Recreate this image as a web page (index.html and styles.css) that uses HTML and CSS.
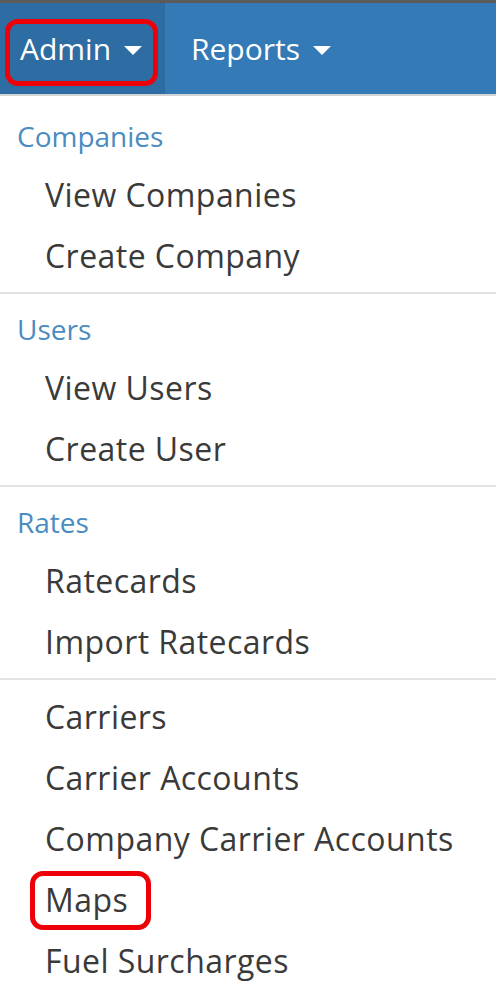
FILE: index.html
```html
<!DOCTYPE html>
<html>
<head>
<meta charset="utf-8">
<link rel="stylesheet" href="styles.css">
</head>
<body>
<div class="topline"></div>
<nav class="navbar">
  <div class="nav-item active"><a class="nav-link marked-nav">Admin <span class="caret"></span></a></div>
  <div class="nav-item"><a class="nav-link">Reports <span class="caret"></span></a></div>
</nav>
<div class="menu">
  <div class="section first">
    <div class="header">Companies</div>
    <div class="item">View Companies</div>
    <div class="item">Create Company</div>
  </div>
  <div class="divider"></div>
  <div class="section">
    <div class="header">Users</div>
    <div class="item">View Users</div>
    <div class="item">Create User</div>
  </div>
  <div class="divider"></div>
  <div class="section">
    <div class="header">Rates</div>
    <div class="item">Ratecards</div>
    <div class="item">Import Ratecards</div>
  </div>
  <div class="divider"></div>
  <div class="section last">
    <div class="item">Carriers</div>
    <div class="item">Carrier Accounts</div>
    <div class="item">Company Carrier Accounts</div>
    <div class="item"><span class="mark">Maps</span></div>
    <div class="item">Fuel Surcharges</div>
  </div>
</div>
</body>
</html>
```
FILE: styles.css
```css
html, body {
  margin: 0;
  padding: 0;
  background: #ffffff;
  font-family: "Open Sans", "Noto Sans", sans-serif;
  overflow: hidden;
}
.topline {
  height: 3px;
  background: #5b5b5b;
}
.navbar {
  display: flex;
  height: 91px;
  background: #337ab7;
  border-bottom: 2px solid #d4d4d4;
}
.nav-item {
  display: flex;
  align-items: center;
  height: 100%;
}
.nav-item.active {
  width: 165px;
  background: #2e6da4;
}
.nav-link {
  position: relative;
  display: flex;
  align-items: center;
  color: #ffffff;
  font-size: 30px;
  padding-left: 20px;
  white-space: pre;
}
.nav-item:not(.active) .nav-link {
  padding-left: 26px;
}
.caret {
  display: inline-block;
  width: 0;
  height: 0;
  margin-left: 5px;
  margin-top: 4px;
  border-left: 9px solid transparent;
  border-right: 9px solid transparent;
  border-top: 9px solid #ffffff;
}
.marked-nav::after {
  content: "";
  position: absolute;
  left: 5px;
  right: -16px;
  top: -9px;
  bottom: -17px;
  border: 5px solid #ee0008;
  border-radius: 13px;
}
.menu {
  display: flex;
  flex-direction: column;
}
.section {
  display: flex;
  flex-direction: column;
  padding-top: 6px;
  padding-bottom: 5px;
}
.section.first {
  padding-top: 11px;
  padding-bottom: 5px;
}
.section.last {
  padding-top: 7px;
}
.header {
  height: 58px;
  line-height: 58px;
  padding-left: 17px;
  font-size: 28px;
  color: #4a8cc2;
}
.item {
  height: 61px;
  line-height: 60px;
  padding-left: 45px;
  font-size: 32px;
  letter-spacing: 0.45px;
  color: #3a3a3a;
  white-space: nowrap;
}
.divider {
  height: 2px;
  background: #e3e3e3;
}
.mark {
  position: relative;
  display: inline-block;
}
.mark::after {
  content: "";
  position: absolute;
  left: -15px;
  right: -23px;
  top: 1px;
  bottom: 0px;
  border: 5px solid #ee0008;
  border-radius: 13px;
}
```
